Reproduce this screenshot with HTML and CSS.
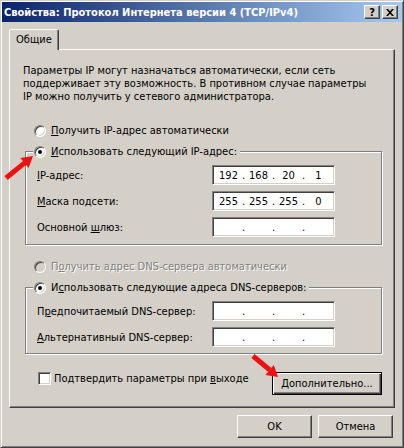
FILE: index.html
```html
<!DOCTYPE html>
<html lang="ru">
<head>
<meta charset="utf-8">
<title>Свойства: Протокол Интернета версии 4 (TCP/IPv4)</title>
<link rel="stylesheet" href="styles.css">
</head>
<body>
<div class="window">
  <div class="caption">
    <span class="title">Свойства: Протокол Интернета версии 4 (TCP/IPv4)</span>
    <div class="cap-btns">
      <span class="cap-btn help">?</span>
      <span class="cap-btn close"><svg width="8" height="7" viewBox="0 0 8 7"><path d="M0 0h2l2 2.3L6 0h2L5 3.5 8 7H6L4 4.7 2 7H0l3-3.5z" fill="#000"/></svg></span>
    </div>
  </div>
  <div class="body">
    <div class="tabs"><div class="tab">Общие</div></div>
    <div class="panel">
      <p class="desc">Параметры IP могут назначаться автоматически, если сеть<br>поддерживает эту возможность. В противном случае параметры<br>IP можно получить у сетевого администратора.</p>
      <div class="opt opt-first"><span class="radio"></span><span><u>П</u>олучить IP-адрес автоматически</span></div>
      <fieldset class="group g1">
        <legend class="opt"><span class="radio on"></span><span><u>И</u>спользовать следующий IP-адрес:</span></legend>
        <div class="grid">
          <span class="lbl"><u>I</u>P-адрес:</span>
          <div class="field"><span>192</span><i>.</i><span>168</span><i>.</i><span>20</span><i>.</i><span>1</span></div>
          <span class="lbl"><u>М</u>аска подсети:</span>
          <div class="field"><span>255</span><i>.</i><span>255</span><i>.</i><span>255</span><i>.</i><span>0</span></div>
          <span class="lbl">Основной <u>ш</u>люз:</span>
          <div class="field"><span></span><i>.</i><span></span><i>.</i><span></span><i>.</i><span></span></div>
        </div>
      </fieldset>
      <div class="opt opt-dis"><span class="radio dis"></span><span>П<u>о</u>лучить адрес DNS-сервера автоматически</span></div>
      <fieldset class="group g2">
        <legend class="opt"><span class="radio on"></span><span>И<u>с</u>пользовать следующие адреса DNS-серверов:</span></legend>
        <div class="grid">
          <span class="lbl">П<u>р</u>едпочитаемый DNS-сервер:</span>
          <div class="field"><span></span><i>.</i><span></span><i>.</i><span></span><i>.</i><span></span></div>
          <span class="lbl"><u>А</u>льтернативный DNS-сервер:</span>
          <div class="field"><span></span><i>.</i><span></span><i>.</i><span></span><i>.</i><span></span></div>
        </div>
      </fieldset>
      <div class="bottom">
        <div class="check"><span class="box"></span><span>Подтвердить параметры при <u>в</u>ыходе</span></div>
        <button class="btn default" type="button"><u>Д</u>ополнительно...</button>
      </div>
    </div>
    <div class="actions">
      <button class="btn" type="button">OK</button>
      <button class="btn" type="button">Отмена</button>
    </div>
  </div>
  <svg class="arrows" width="404" height="448" viewBox="0 0 404 448">
    <line x1="6" y1="178" x2="25" y2="162.6" stroke="#ee1111" stroke-width="5"/>
    <polygon points="33,156 28.6,168 20.4,158" fill="#ee1111"/>
    <line x1="253" y1="356" x2="269.8" y2="370" stroke="#ee1111" stroke-width="5"/>
    <polygon points="278,377 265.4,374.9 273.8,364.9" fill="#ee1111"/>
  </svg>
</div>
</body>
</html>
```
FILE: styles.css
```css
html, body {
  margin: 0;
  background: #d4d0c8;
}

.window {
  position: relative;
  width: 404px;
  height: 448px;
  box-sizing: border-box;
  background: #d4d0c8;
  border: 1px solid;
  border-color: #d4d0c8 #404040 #404040 #d4d0c8;
  box-shadow: inset 1px 1px #fff, inset -1px -1px #808080;
  padding: 1px;
  font-family: "DejaVu Sans Condensed", "DejaVu Sans", sans-serif;
  font-size: 11px;
  line-height: 13px;
  color: #000;
}

.caption {
  height: 20px;
  display: flex;
  align-items: center;
  justify-content: space-between;
  background: linear-gradient(to right, #0a246a, #a6caf0);
  padding: 0 4px 0 2px;
}

.title {
  color: #fff;
  font-weight: bold;
  white-space: nowrap;
}

.cap-btns {
  display: flex;
  gap: 2px;
}

.cap-btn {
  width: 16px;
  height: 14px;
  box-sizing: border-box;
  background: #d4d0c8;
  border: 1px solid;
  border-color: #fff #404040 #404040 #fff;
  box-shadow: inset -1px -1px #808080;
  display: flex;
  align-items: center;
  justify-content: center;
  font-weight: bold;
  font-size: 11px;
  line-height: 1;
}

.body {
  padding: 7px 7px 0 7px;
}

.tabs {
  display: flex;
}

.tab {
  position: relative;
  z-index: 1;
  height: 21px;
  box-sizing: border-box;
  padding: 0 6px;
  line-height: 19px;
  border: 1px solid;
  border-bottom: 0;
  border-color: #fff #404040 transparent #fff;
  box-shadow: inset -1px 0 #808080;
  border-top-left-radius: 2px;
  border-top-right-radius: 2px;
  background: #d4d0c8;
  margin-bottom: -1px;
}

.panel {
  box-sizing: border-box;
  height: 359px;
  border: 1px solid;
  border-color: #fff #404040 #404040 #fff;
  box-shadow: inset -1px -1px #808080;
}

.desc {
  margin: 14px 0 0 13px;
  white-space: nowrap;
}

.opt {
  display: flex;
  align-items: center;
  height: 13px;
  gap: 5px;
  white-space: nowrap;
}

.opt-first {
  margin: 21px 0 0 24px;
}

.opt-dis {
  margin: 15px 0 0 24px;
  color: #808080;
  text-shadow: 1px 1px #fff;
}

.radio {
  position: relative;
  width: 12px;
  height: 12px;
  box-sizing: border-box;
  border-radius: 50%;
  background: #fff;
  border: 1px solid;
  border-color: #808080 #fff #fff #808080;
  box-shadow: inset 1px 1px #404040, inset -1px -1px #d4d0c8;
  flex: none;
}

.radio.on::after {
  content: "";
  position: absolute;
  left: 3px;
  top: 3px;
  width: 4px;
  height: 4px;
  border-radius: 50%;
  background: #000;
}

.radio.dis {
  background: #d4d0c8;
}

.group {
  margin: 8px 12px 0 15px;
  padding: 7px 0 7px 7px;
  border: 1px solid #808080;
  box-shadow: 1px 1px 0 #fff, inset 1px 1px 0 #fff;
  min-width: 0;
}

.g2 {
  padding-bottom: 6px;
}

.group legend {
  padding: 0 3px 0 1px;
  margin-left: 0;
  background: #d4d0c8;
}

.grid {
  display: grid;
  grid-template-columns: 175px 123px;
  row-gap: 6px;
  margin-left: 4px;
  align-items: center;
}

.lbl {
  white-space: nowrap;
}

.field {
  height: 20px;
  box-sizing: border-box;
  background: #fff;
  border: 1px solid;
  border-color: #808080 #fff #fff #808080;
  box-shadow: inset 1px 1px #404040, inset -1px -1px #d4d0c8;
  display: flex;
  align-items: center;
  padding-left: 3px;
}

.field span {
  width: 25px;
  text-align: center;
}

.field i {
  width: 5px;
  text-align: center;
  font-style: normal;
}

.bottom {
  display: flex;
  justify-content: space-between;
  align-items: flex-start;
  margin: 18px 12px 0 28px;
}

.check {
  display: flex;
  align-items: center;
  gap: 3px;
  margin-top: 0;
  white-space: nowrap;
  line-height: 13px;
}

.box {
  width: 13px;
  height: 13px;
  box-sizing: border-box;
  background: #fff;
  border: 1px solid;
  border-color: #808080 #fff #fff #808080;
  box-shadow: inset 1px 1px #404040, inset -1px -1px #d4d0c8;
  flex: none;
}

.btn {
  font: inherit;
  color: #000;
  width: 75px;
  height: 23px;
  box-sizing: border-box;
  padding: 0;
  background: #d4d0c8;
  border: 1px solid;
  border-color: #fff #404040 #404040 #fff;
  box-shadow: inset -1px -1px #808080;
}

.btn.default {
  width: 110px;
  border: 1px solid #000;
  box-shadow: inset 1px 1px #fff, inset -1px -1px #404040, inset -2px -2px #808080;
}

.actions {
  display: flex;
  justify-content: flex-end;
  gap: 6px;
  margin: 7px 2px 0 0;
}

.arrows {
  position: absolute;
  left: -1px;
  top: -1px;
  pointer-events: none;
}
```
